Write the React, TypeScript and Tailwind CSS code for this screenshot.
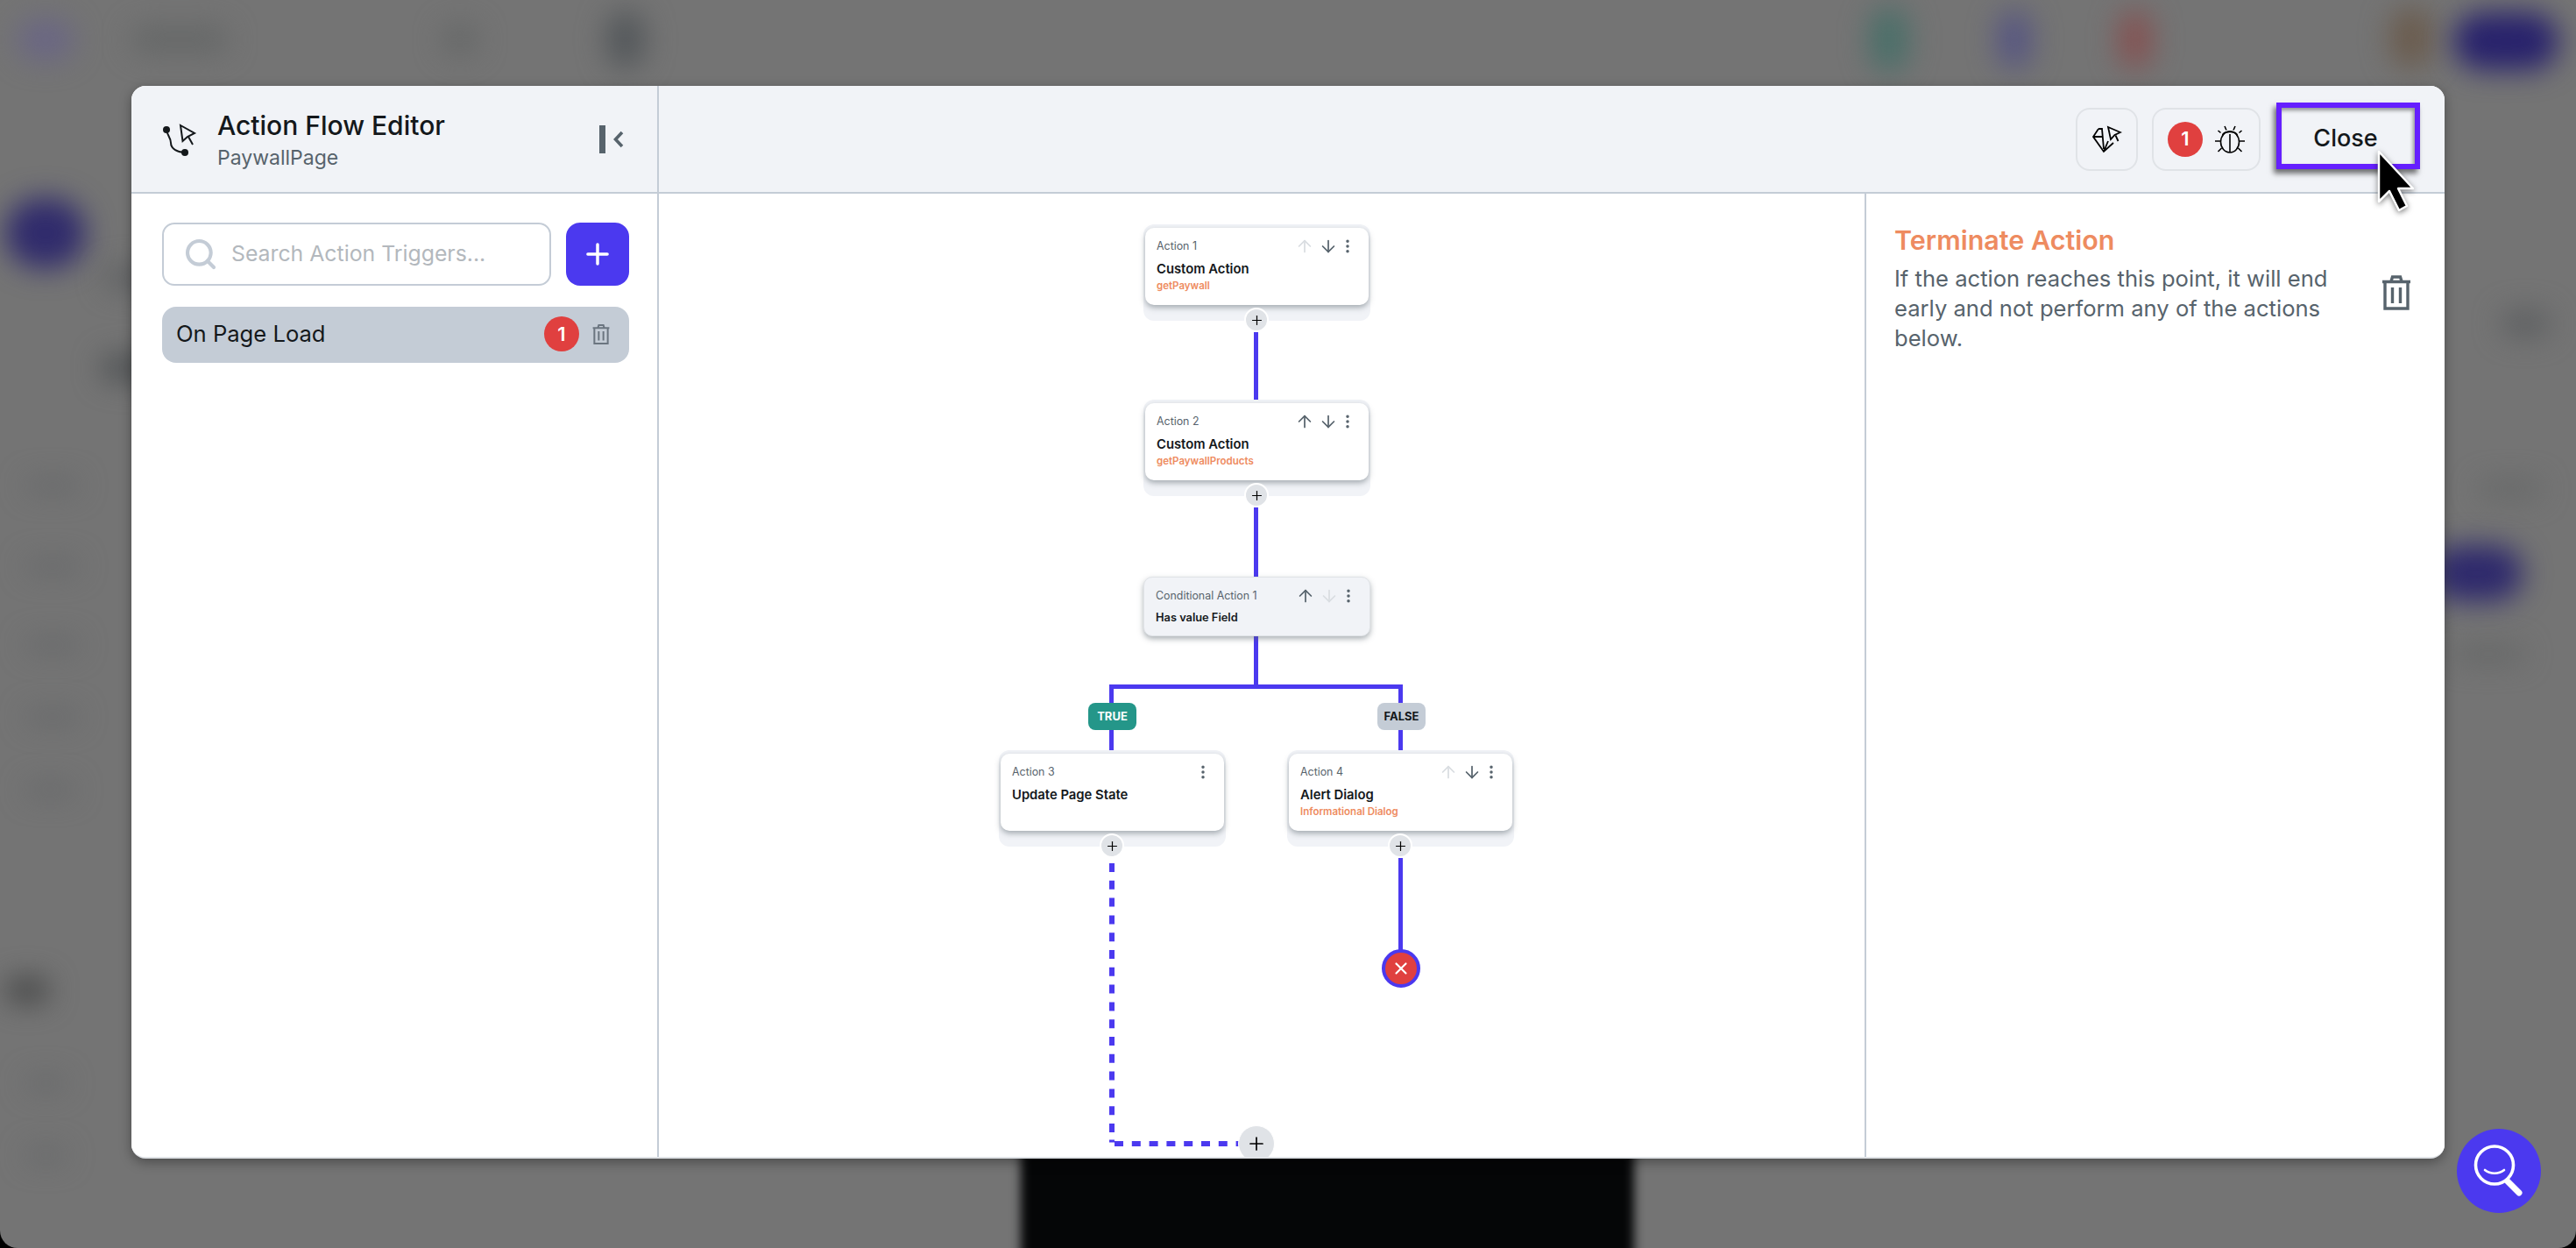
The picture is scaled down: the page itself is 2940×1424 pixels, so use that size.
import { ArrowDown, ArrowUp, EllipsisVertical, Plus, Search, X } from "lucide-react";

// Blurred shapes of the page that sits behind the dialog
const backdropBlobs = [
  "left-[20px] top-[22px] h-[46px] w-[64px] bg-[#6a6684]",
  "left-[6px] top-[226px] h-[80px] w-[92px] bg-[#302b6c]",
  "left-[120px] top-[305px] h-[24px] w-[100px] bg-[#5d5f61]",
  "left-[115px] top-[405px] h-[30px] w-[80px] bg-[#505355]",
  "left-[30px] top-[548px] h-[12px] w-[60px] bg-[#626466]",
  "left-[30px] top-[640px] h-[12px] w-[60px] bg-[#626466]",
  "left-[30px] top-[730px] h-[12px] w-[60px] bg-[#626466]",
  "left-[30px] top-[812px] h-[12px] w-[60px] bg-[#626466]",
  "left-[30px] top-[895px] h-[12px] w-[55px] bg-[#626466]",
  "left-[6px] top-[1116px] h-[28px] w-[50px] bg-[#454646]",
  "left-[30px] top-[1230px] h-[12px] w-[45px] bg-[#626466]",
  "left-[30px] top-[1312px] h-[12px] w-[45px] bg-[#626466]",
  "left-[150px] top-[30px] h-[30px] w-[110px] bg-[#656767]",
  "left-[505px] top-[28px] h-[34px] w-[40px] bg-[#656767]",
  "left-[692px] top-[12px] h-[66px] w-[44px] bg-[#54585b]",
  "left-[2134px] top-[8px] h-[74px] w-[44px] bg-[#4a6f69]",
  "left-[2280px] top-[12px] h-[66px] w-[38px] bg-[#565582]",
  "left-[2418px] top-[12px] h-[66px] w-[38px] bg-[#855252]",
  "left-[2728px] top-[8px] h-[70px] w-[48px] bg-[#6b5c4e]",
  "left-[2800px] top-[14px] h-[66px] w-[120px] bg-[#28226c]",
  "left-[2855px] top-[355px] h-[28px] w-[55px] bg-[#5c5e60]",
  "left-[2775px] top-[622px] h-[64px] w-[104px] bg-[#2e296c]",
  "left-[2800px] top-[738px] h-[16px] w-[80px] bg-[#616363]",
  "left-[2830px] top-[550px] h-[16px] w-[70px] bg-[#636565]",
];

// Trash can used in the trigger row and in the details panel
const TrashIcon = ({ className }: { className: string }) => (
  <svg viewBox="0 0 34 40" fill="none" stroke="currentColor" strokeWidth="3.4" className={className}>
    <path d="M1 7.5H33M11 7L12.5 2H21.5L23 7M4 8V38H30V8M12.5 14V32M21.5 14V32" />
  </svg>
);

// Curved branch with a pointer, shown next to the title
const FlowIcon = () => (
  <svg viewBox="0 0 40 40" fill="none" stroke="#14181b" strokeWidth="2" className="h-10 w-10 shrink-0">
    <circle cx="5" cy="9" r="4" fill="#14181b" stroke="none" />
    <circle cx="26" cy="35" r="4" fill="#14181b" stroke="none" />
    <path d="M5 9C5 14 10 18 10 24C10 31 18 35 26 35" />
    <path d="M21 4L37 13L29 17L23.5 22Z" />
    <path d="M30 17L35 26" />
  </svg>
);

const GemIcon = () => (
  <svg viewBox="0 0 34 32" fill="none" stroke="#000" strokeWidth="1.8" className="h-8 w-[34px]">
    <path d="M7 4H11L13 27M7 4L1 13L13 30L24 20M1 13H11M13 30L18 18" />
    <path d="M18 2L32 8L25.5 11L21 16Z" />
    <path d="M26.5 11.5L29.5 18" />
  </svg>
);

const BugIcon = () => (
  <svg viewBox="0 0 34 32" fill="none" stroke="#000" strokeWidth="1.6" className="h-8 w-[34px]">
    <ellipse cx="17" cy="19" rx="10.5" ry="12" />
    <path d="M8.5 11.5C10 6 24 6 25.5 11.5M17 10V31" />
    <path d="M11 1L13 5.5M23 1L21 5.5M6.5 8.5L3.5 6M27.5 8.5L30.5 6M0 18H6.5M27.5 18H34M7.5 26L3.5 30M26.5 26L30.5 30" />
  </svg>
);

const MoveArrows = ({ up, down }: { up: boolean; down: boolean }) => (
  <>
    <ArrowUp size={22} strokeWidth={1.9} className={up ? "text-[#57636c]" : "text-[#d9dde1]"} />
    <ArrowDown size={22} strokeWidth={1.9} className={down ? "text-[#57636c]" : "text-[#d9dde1]"} />
  </>
);

const AddButton = ({ className }: { className: string }) => (
  <div className={`absolute flex h-7 w-7 items-center justify-center rounded-full border-2 border-white bg-[#e0e3e7] ${className}`}>
    <Plus size={17} strokeWidth={1.7} className="text-black" />
  </div>
);

interface ActionNodeProps {
  position: string;
  label: string;
  title: string;
  detail?: string;
  up?: boolean;
  down?: boolean;
  arrows?: boolean;
}

// One action card with its pale tray and the add button on the tray edge
const ActionNode = ({ position, label, title, detail, up = true, down = true, arrows = true }: ActionNodeProps) => (
  <div className={`absolute h-[110px] w-[259px] rounded-[12px] bg-[#f1f3f7] px-[2px] pt-[4px] ${position}`}>
    <div className="h-[88px] rounded-[10px] bg-white pl-[13px] pr-[14px] pt-[10px] shadow-[0_3px_6px_rgba(87,99,108,0.5)]">
      <div className="flex h-[22px] items-center">
        <span className="mr-auto text-[12.4px] text-[#57636c]">{label}</span>
        {arrows && (
          <div className="mr-[1px] flex gap-[5px]">
            <MoveArrows up={up} down={down} />
          </div>
        )}
        <EllipsisVertical size={20} strokeWidth={2.2} className="text-[#57636c]" />
      </div>
      <div className="mt-[5px] text-[14.8px] font-semibold leading-[20px] text-[#14181b]">{title}</div>
      {detail && <div className="text-[11.5px] font-semibold leading-[18px] text-[#ee8b60]">{detail}</div>}
    </div>
    <AddButton className="bottom-[-13px] left-[115px]" />
  </div>
);

const ConditionNode = () => (
  <div className="absolute left-[553px] top-[437px] h-[68px] w-[259px] rounded-[10px] border border-[#e0e3e7] bg-[#f1f3f7] pl-[13px] pr-[14px] pt-[10px] shadow-[0_3px_6px_rgba(87,99,108,0.5)]">
    <div className="flex h-[22px] items-center">
      <span className="mr-auto text-[12.4px] text-[#57636c]">Conditional Action 1</span>
      <div className="mr-[1px] flex gap-[5px]">
        <MoveArrows up={true} down={false} />
      </div>
      <EllipsisVertical size={20} strokeWidth={2.2} className="text-[#57636c]" />
    </div>
    <div className="mt-[5px] text-[12.8px] font-semibold leading-[18px] text-[#14181b]">Has value Field</div>
  </div>
);

const FlowCanvas = () => (
  <div className="relative min-w-0 flex-1 overflow-hidden bg-white">
    {/* connectors */}
    <div className="absolute left-[679px] top-[158px] h-[77px] w-[5px] bg-[#4b39ef]" />
    <div className="absolute left-[679px] top-[358px] h-[79px] w-[5px] bg-[#4b39ef]" />
    <div className="absolute left-[679px] top-[505px] h-[58px] w-[5px] bg-[#4b39ef]" />
    <div className="absolute left-[514px] top-[560px] h-[5px] w-[335px] bg-[#4b39ef]" />
    <div className="absolute left-[514px] top-[560px] h-[76px] w-[5px] bg-[#4b39ef]" />
    <div className="absolute left-[844px] top-[560px] h-[76px] w-[5px] bg-[#4b39ef]" />
    <div className="absolute left-[844px] top-[758px] h-[108px] w-[5px] bg-[#4b39ef]" />
    <svg className="absolute left-[510px] top-[760px] h-[330px] w-[160px]" fill="none" stroke="#4b39ef">
      <path d="M7 4V312" strokeWidth="6" strokeDasharray="10 9.8" />
      <path d="M4 321H10" strokeWidth="3" />
      <path d="M10 324H152" strokeWidth="6" strokeDasharray="10 9.8" />
    </svg>

    <ActionNode position="left-[553px] top-[35px]" label="Action 1" title="Custom Action" detail="getPaywall" up={false} />
    <ActionNode position="left-[553px] top-[235px]" label="Action 2" title="Custom Action" detail="getPaywallProducts" />
    <ConditionNode />
    <ActionNode position="left-[388px] top-[635px]" label="Action 3" title="Update Page State" arrows={false} />
    <ActionNode position="left-[717px] top-[635px]" label="Action 4" title="Alert Dialog" detail="Informational Dialog" up={false} />

    <div className="absolute left-[490px] top-[581px] flex h-[31px] w-[55px] items-center justify-center rounded-[8px] bg-[#249689] text-[13px] font-bold text-white">
      TRUE
    </div>
    <div className="absolute left-[820px] top-[581px] flex h-[31px] w-[55px] items-center justify-center rounded-[8px] bg-[#c4ccd6] text-[13px] font-bold text-[#14181b]">
      FALSE
    </div>

    <div className="absolute left-[825px] top-[862px] flex h-11 w-11 items-center justify-center rounded-full border-[4px] border-[#4b39ef] bg-[#e0403f]">
      <X size={22} strokeWidth={2.4} className="text-white" />
    </div>
    <div className="absolute left-[661px] top-[1063px] flex h-[42px] w-[42px] items-center justify-center rounded-full border border-white bg-[#e0e3e7]">
      <Plus size={24} strokeWidth={1.7} className="text-black" />
    </div>
  </div>
);

const Sidebar = () => (
  <div className="w-[602px] shrink-0 border-r-2 border-[#c4ccd6] bg-white pl-[35px] pr-[32px] pt-[33px]">
    <div className="flex gap-[17px]">
      <div className="flex h-[72px] min-w-0 flex-1 items-center gap-[15px] rounded-[14px] border-2 border-[#c4ccd6] pl-[22px]">
        <Search size={40} strokeWidth={2.5} className="shrink-0 text-[#c4ccd6]" />
        <span className="text-[24.8px] text-[#b3b8bd]">Search Action Triggers...</span>
      </div>
      <div className="flex h-[72px] w-[72px] shrink-0 items-center justify-center rounded-[16px] bg-[#4b39ef]">
        <Plus size={38} strokeWidth={2.2} className="text-white" />
      </div>
    </div>
    <div className="mt-[24px] flex h-[64px] items-center rounded-[16px] bg-[#c4ccd6] pb-[2px] pl-[16px] pr-[22px]">
      <span className="mr-auto text-[25.6px] text-[#14181b]">On Page Load</span>
      <div className="flex h-10 w-10 items-center justify-center rounded-full bg-[#e0403f] text-[22px] font-semibold text-white">1</div>
      <TrashIcon className="ml-[15px] h-[25px] w-[20px] text-[#6b7580]" />
    </div>
  </div>
);

const DetailsPanel = () => (
  <div className="w-[662px] shrink-0 border-l-2 border-[#c4ccd6] bg-white pl-[32px] pr-[38px] pt-[32px]">
    <div className="text-[30.5px] font-semibold leading-[42px] text-[#ee8b60]">Terminate Action</div>
    <div className="mt-[6px] flex items-center justify-between">
      <p className="whitespace-nowrap text-[25.6px] leading-[34px] text-[#57636c]">
        If the action reaches this point, it will end
        <br />
        early and not perform any of the actions
        <br />
        below.
      </p>
      <TrashIcon className="mb-[36px] h-[40px] w-[34px] text-[#57636c]" />
    </div>
  </div>
);

const Header = () => (
  <div className="flex h-[123px] shrink-0 border-b-2 border-[#c4ccd6] bg-[#f1f3f7]">
    <div className="flex w-[602px] shrink-0 items-center border-r-2 border-[#c4ccd6] pl-[35px] pr-[38px]">
      <FlowIcon />
      <div className="ml-[23px] mr-auto">
        <div className="text-[30px] font-medium leading-[42px] text-[#14181b]">Action Flow Editor</div>
        <div className="text-[23px] leading-[32px] text-[#57636c]">PaywallPage</div>
      </div>
      <svg viewBox="0 0 28 32" fill="none" stroke="#57636c" className="h-8 w-7">
        <path d="M3.5 1V31" strokeWidth="7" strokeLinecap="round" />
        <path d="M26 8L18.5 16L26 24" strokeWidth="3.6" />
      </svg>
    </div>
    <div className="flex min-w-0 flex-1 items-center justify-end pr-[28px]">
      <div className="flex h-[72px] w-[71px] items-center justify-center rounded-[16px] border-2 border-[#e0e3e7]">
        <GemIcon />
      </div>
      <div className="ml-[16px] flex h-[72px] w-[124px] items-center justify-center gap-[14px] rounded-[16px] border-2 border-[#e0e3e7]">
        <div className="flex h-10 w-10 items-center justify-center rounded-full bg-[#e0403f] text-[22px] font-semibold text-white">1</div>
        <BugIcon />
      </div>
      <div className="mb-[8px] ml-[18px] flex h-[76px] w-[164px] items-center justify-center border-[6px] border-[#651fff] pr-[6px] pt-[8px] text-[27px] font-medium text-[#14181b] shadow-[-3px_5px_6px_rgba(0,0,0,0.55),inset_-2px_3px_4px_rgba(0,0,0,0.4)]">
        Close
      </div>
    </div>
  </div>
);

export default function App() {
  return (
    <div className="relative h-[1424px] w-[2940px] overflow-hidden bg-black font-['Inter',sans-serif]">
      {/* page behind the dialog, out of focus */}
      <div className="absolute inset-0 overflow-hidden rounded-b-[20px] bg-[#747474]">
        {backdropBlobs.map((blob) => (
          <div key={blob} className={`absolute rounded-full blur-[16px] ${blob}`} />
        ))}
        <div className="absolute left-[1165px] top-[1200px] h-[240px] w-[700px] bg-[#050607] blur-[6px]" />
      </div>

      <div className="relative pl-[150px] pt-[98px]">
        <div className="flex h-[1224px] w-[2640px] flex-col overflow-hidden rounded-[16px] border-b-2 border-[#e0e3e7] bg-white shadow-[0_4px_14px_rgba(0,0,0,0.35)]">
          <Header />
          <div className="flex min-h-0 flex-1">
            <Sidebar />
            <FlowCanvas />
            <DetailsPanel />
          </div>
        </div>
      </div>

      {/* help bubble */}
      <div className="absolute left-[2804px] top-[1288px] h-24 w-24 rounded-full bg-[#4b39ef]">
        <svg viewBox="0 0 96 96" fill="none" stroke="#fff" className="h-24 w-24">
          <circle cx="43" cy="41.5" r="21.5" strokeWidth="3.6" />
          <path d="M58 60L71 73" strokeWidth="7" strokeLinecap="round" />
          <path d="M32 47C38 52 48 52 54 47" strokeWidth="2.6" strokeLinecap="round" />
        </svg>
      </div>

      {/* mouse pointer */}
      <svg viewBox="0 0 50 76" className="absolute left-[2712px] top-[170px] h-[76px] w-[50px] drop-shadow-[0_2px_3px_rgba(0,0,0,0.5)]">
        <path d="M3 3V60L15 48L26 70L35 65L25 45H42Z" fill="#000" stroke="#fff" strokeWidth="2.5" strokeLinejoin="round" />
      </svg>
    </div>
  );
}
